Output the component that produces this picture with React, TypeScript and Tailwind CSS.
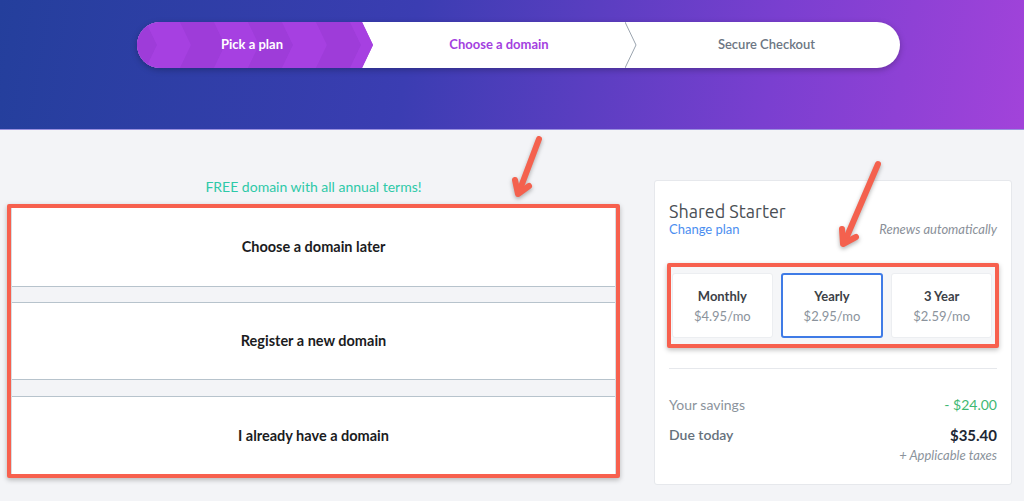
import React from "react";

const chevrons = Array.from({ length: 8 }, (_, i) => i);

const PlanOption = ({
  name,
  price,
  active,
}: {
  name: string;
  price: string;
  active?: boolean;
}) => (
  <div
    className={
      "flex-1 h-[65px] flex flex-col items-center justify-center bg-white rounded-[3px] " +
      (active ? "border-2 border-[#3f7be6]" : "border border-[#eceef1]")
    }
  >
    <span className="text-[13px] font-bold text-[#3c4147] leading-4">{name}</span>
    <span className="text-[13px] text-[#8b939c] leading-4 mt-[4px]">{price}</span>
  </div>
);

export default function App() {
  return (
    <div
      className="relative w-full min-h-[501px] bg-[#f3f4f7] overflow-hidden"
      style={{ fontFamily: "Lato, 'Open Sans', sans-serif" }}
    >
      <header className="h-[130px] pt-[22px] bg-[linear-gradient(100deg,#243f9c_0%,#3b3db2_40%,#7a3fd0_75%,#a243da_100%)] border-b border-[#9a90df]">
        <div className="ml-[137px] w-[763px] h-[46px] rounded-full bg-white shadow-[0_2px_6px_rgba(0,0,0,0.25)] overflow-hidden flex">
          <div className="relative w-[236px] h-full flex items-center justify-center [clip-path:polygon(0_0,225px_0,236px_50%,225px_100%,0_100%)]">
            <svg className="absolute inset-0" width="236" height="46" viewBox="0 0 236 46">
              <rect width="236" height="46" fill="#a23fde" />
              {chevrons.map((i) => {
                const x = -25 + i * 34;
                return (
                  <polygon
                    key={i}
                    points={`${x},0 ${x + 34},0 ${x + 45},23 ${x + 34},46 ${x},46 ${x + 11},23`}
                    fill={i % 2 === 0 ? "#9e3cd9" : "#a640e1"}
                  />
                );
              })}
            </svg>
            <span className="relative text-[13px] font-bold text-white pr-[6px]">Pick a plan</span>
          </div>
          <div className="w-[252px] h-full flex items-center justify-center">
            <span className="text-[13px] font-bold text-[#a33fe0]">Choose a domain</span>
          </div>
          <svg width="12" height="46" viewBox="0 0 12 46" className="shrink-0">
            <polyline points="0,0 11,23 0,46" fill="none" stroke="#9aa4ae" strokeWidth="1" />
          </svg>
          <div className="flex-1 h-full flex items-center justify-center pr-[4px]">
            <span className="text-[13px] font-semibold text-[#6c7683]">Secure Checkout</span>
          </div>
        </div>
      </header>

      <main className="flex pt-[46px] pl-[7px] pr-[12px] gap-[34px]">
        <section className="w-[613px] shrink-0">
          <p className="text-center text-[14px] leading-5 text-[#2ec9a8] h-5 pt-[1px]">
            FREE domain with all annual terms!
          </p>
          <div className="mt-[8px] border-4 border-[#f7604e] rounded-[2px] shadow-[0_2px_5px_rgba(0,0,0,0.25)] bg-[#f3f4f7]">
            <div className="border-x border-[#d7dde2]">
              <div className="h-[79px] bg-white border-b border-[#b7c3cc] flex items-center justify-center">
                <span className="text-[14.5px] font-bold text-[#1b1c1e]">Choose a domain later</span>
              </div>
              <div className="h-[15px]" />
              <div className="h-[78px] bg-white border-y border-[#b7c3cc] flex items-center justify-center">
                <span className="text-[14.5px] font-bold text-[#1b1c1e]">Register a new domain</span>
              </div>
              <div className="h-[16px]" />
              <div className="h-[78px] bg-white border-t border-[#b7c3cc] flex items-center justify-center">
                <span className="text-[14.5px] font-bold text-[#1b1c1e]">I already have a domain</span>
              </div>
            </div>
          </div>
        </section>

        <aside className="mt-[4px] w-[358px] h-[305px] bg-white border border-[#e6e8ec] rounded-[3px] px-[14px] pt-[18px]">
          <h2
            className="text-[18px] leading-6 text-[#494e54]"
            style={{ fontFamily: "Ubuntu, 'Open Sans', sans-serif" }}
          >
            Shared Starter
          </h2>
          <div className="flex justify-between items-center text-[13px] leading-4 -mt-[2px]">
            <span className="text-[#4b8ef0]">Change plan</span>
            <span className="italic text-[#8a9099]">Renews automatically</span>
          </div>
          <div className="mt-[26px] -mx-[2px] border-4 border-[#f7604e] rounded-[2px] shadow-[0_2px_5px_rgba(0,0,0,0.25)] bg-[#f5f6f8] pl-[1px] pr-[3px] py-[6px] flex gap-[8px]">
            <PlanOption name="Monthly" price="$4.95/mo" />
            <PlanOption name="Yearly" price="$2.95/mo" active />
            <PlanOption name="3 Year" price="$2.59/mo" />
          </div>
          <div className="mt-[20px] border-t border-[#e6e8ec]" />
          <div className="mt-[26px] flex justify-between text-[14px] leading-5">
            <span className="text-[#8b939c]">Your savings</span>
            <span className="text-[#3fb872]">- $24.00</span>
          </div>
          <div className="mt-[10px] flex justify-between items-center leading-5">
            <span className="text-[14px] font-semibold text-[#66717c]">Due today</span>
            <span className="text-[15px] font-bold text-[#1d2734]">$35.40</span>
          </div>
          <p className="text-right italic text-[13px] leading-4 text-[#8b939c] mt-[2px]">
            + Applicable taxes
          </p>
        </aside>
      </main>

      <svg
        className="absolute inset-0 pointer-events-none drop-shadow-[0_2px_2px_rgba(0,0,0,0.3)]"
        width="1024"
        height="501"
        viewBox="0 0 1024 501"
      >
        <g stroke="#f4614e" strokeWidth="6" strokeLinecap="round" strokeLinejoin="round" fill="none">
          <line x1="539" y1="139" x2="519" y2="192" />
          <polyline points="515,180 518,194 529,186" />
          <line x1="878" y1="164" x2="845" y2="241" />
          <polyline points="842,229 843,244 856,237" />
        </g>
      </svg>
    </div>
  );
}
